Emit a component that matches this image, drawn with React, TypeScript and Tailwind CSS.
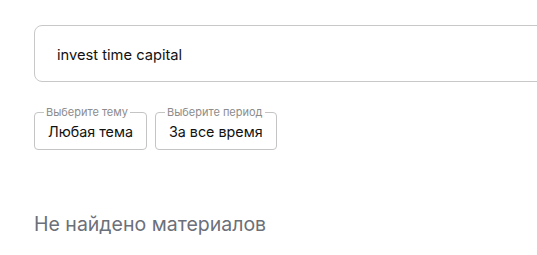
import React from "react";

function SelectField({ label, value }: { label: string; value: string }) {
  return (
    <fieldset className="border border-[#c4c4c4] rounded-[4px] px-[9px] pt-[5px] pb-[9px]">
      <legend className="px-[2px] text-[11px] leading-[11px] text-[#8c8c8c]">{label}</legend>
      <div className="px-[4px] text-[14.3px] leading-[17px] text-[#111111] whitespace-nowrap">{value}</div>
    </fieldset>
  );
}

export default function App() {
  return (
    <div className="w-[537px] h-[255px] bg-white overflow-hidden font-['Inter',sans-serif]">
      <div className="pl-[34px] pt-[25px]">
        <div className="h-[57px] w-[560px] border border-[#c8c8c8] rounded-[8px] flex items-center pl-[22px] pt-[3px] text-[14.7px] text-[#111111]">
          invest time capital
        </div>
        <div className="flex gap-[8px] mt-[25px]">
          <SelectField label="Выберите тему" value="Любая тема" />
          <SelectField label="Выберите период" value="За все время" />
        </div>
        <div className="mt-[62px] text-[19.5px] leading-[24px] text-[#6b7079]">Не найдено материалов</div>
      </div>
    </div>
  );
}
